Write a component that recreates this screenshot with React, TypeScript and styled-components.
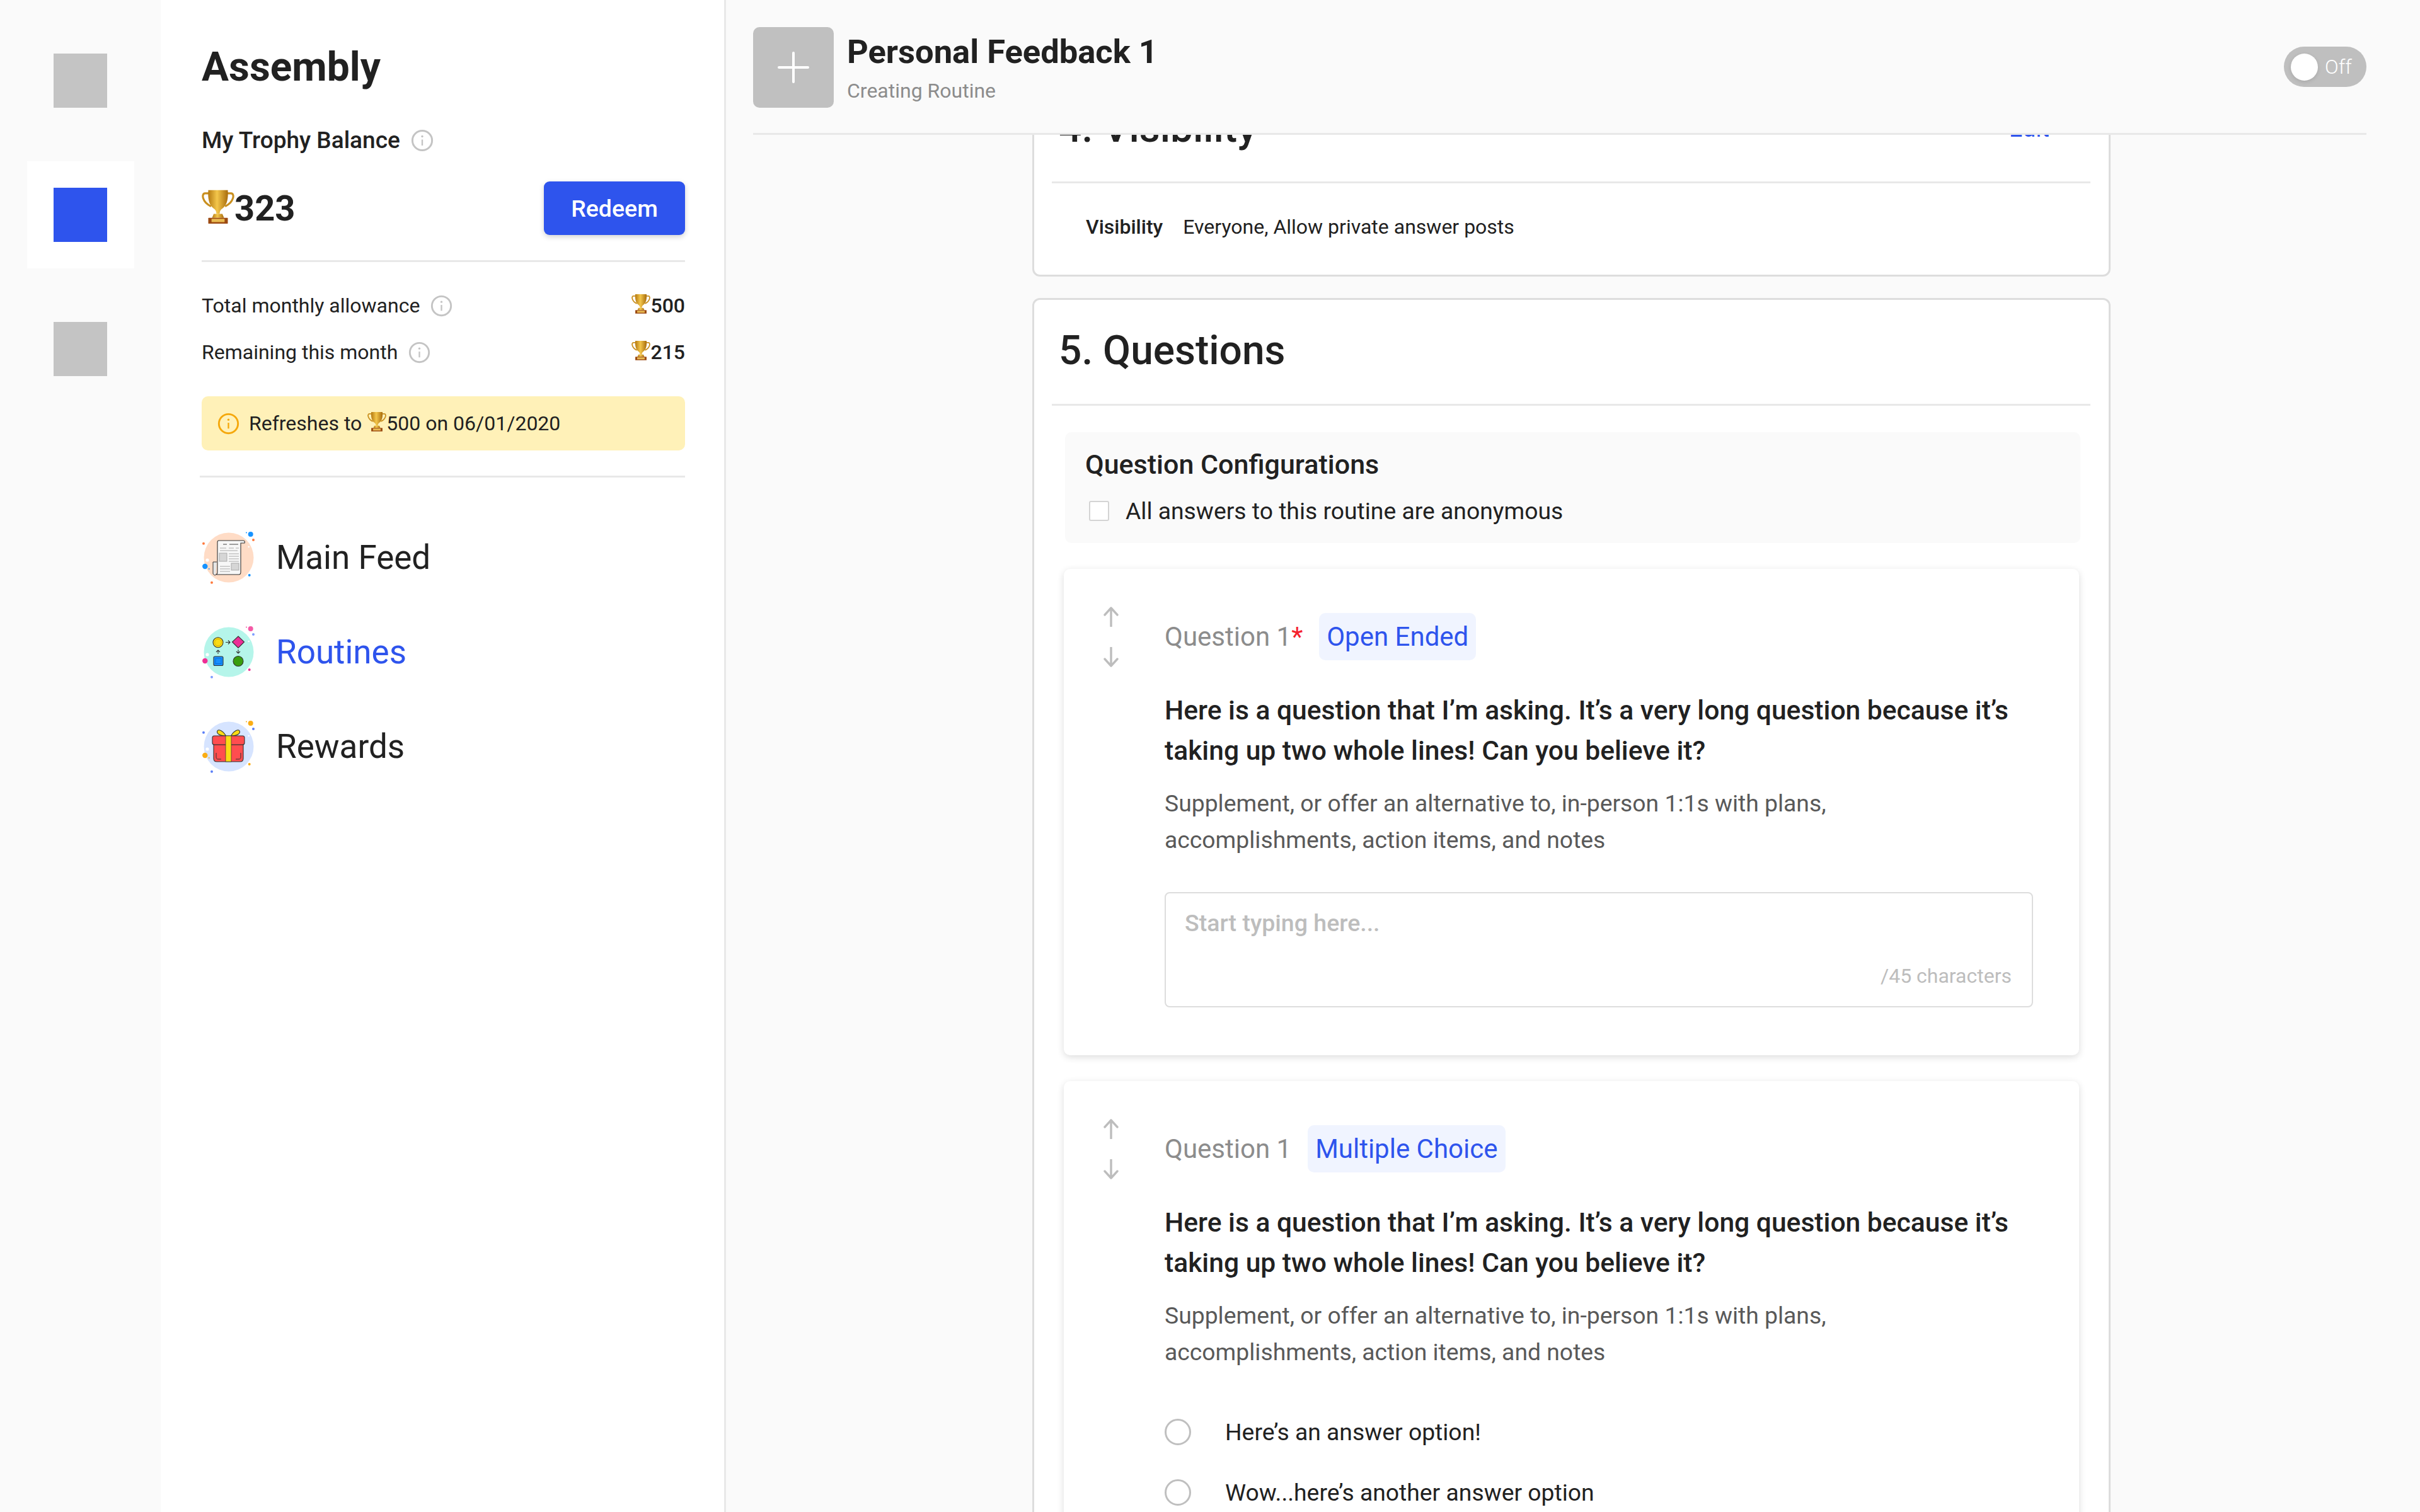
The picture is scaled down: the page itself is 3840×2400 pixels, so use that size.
import { useId } from 'react';
import styled, { createGlobalStyle } from 'styled-components';

const BLUE = '#2e54ed';
const INK = '#212121';

const GlobalStyle = createGlobalStyle`
  html, body {
    margin: 0;
    padding: 0;
    background: #fafafa;
  }
  body {
    font-family: Roboto, "Liberation Sans", sans-serif;
    color: ${INK};
  }
  * {
    box-sizing: border-box;
  }
`;

function Trophy({ size }: { size: number }) {
  const id = useId();
  return (
    <TrophySvg width={size} height={size * 1.06} viewBox="0 0 60 64">
      <defs>
        <linearGradient id={id} x1="0" x2="1" y1="0" y2="0">
          <stop offset="0" stopColor="#b57a12" />
          <stop offset="0.45" stopColor="#f3c64b" />
          <stop offset="1" stopColor="#a86c0c" />
        </linearGradient>
      </defs>
      <path
        d="M15 8H6C2 8 1 13 3 18c2 6 8 11 14 14M45 8h9c4 0 5 5 3 10-2 6-8 11-14 14"
        fill="none"
        stroke="#c98f1e"
        strokeWidth="3.6"
      />
      <path d="M12 2h36c1 15-1 27-9 33-4 3-6 5-6 11h-6c0-6-2-8-6-11C13 29 11 17 12 2z" fill={`url(#${id})`} />
      <path d="M22 46h16l3 7H19z" fill={`url(#${id})`} />
      <rect x="12" y="53" width="36" height="11" rx="1" fill="#9c4a12" />
      <rect x="18" y="55" width="24" height="6" fill="#e9bb52" />
    </TrophySvg>
  );
}

function InfoIcon({ size = 36, color = '#c4c4c4' }: { size?: number; color?: string }) {
  return (
    <svg width={size} height={size} viewBox="0 0 36 36" fill="none" style={{ flex: 'none' }}>
      <circle cx="18" cy="18" r="15.6" stroke={color} strokeWidth="3" />
      <circle cx="18" cy="11.5" r="1.7" fill={color} />
      <path d="M18 16.5v9.5" stroke={color} strokeWidth="2.4" />
    </svg>
  );
}

function ArrowUp() {
  return (
    <svg width="24" height="32" viewBox="0 0 24 32" fill="none">
      <path d="M12 31V2M2 13 12 2l10 11" stroke="#bdbdbd" strokeWidth="3.4" strokeLinecap="round" strokeLinejoin="round" />
    </svg>
  );
}

function ArrowDown() {
  return (
    <svg width="24" height="32" viewBox="0 0 24 32" fill="none">
      <path d="M12 1v29M2 19l10 11 10-11" stroke="#bdbdbd" strokeWidth="3.4" strokeLinecap="round" strokeLinejoin="round" />
    </svg>
  );
}

function FeedIcon() {
  return (
    <svg width="90" height="90" viewBox="0 0 90 90">
      <circle cx="43" cy="45" r="39.5" fill="#ffdcc6" />
      <circle cx="77.7" cy="8" r="4" fill="#1793ff" />
      <circle cx="71" cy="5.5" r="1" fill="#1793ff" />
      <circle cx="82" cy="17" r="2" fill="#ff7a3d" />
      <circle cx="3" cy="22.7" r="2" fill="#ff7a3d" />
      <circle cx="9" cy="49" r="2.6" fill="#fff" />
      <circle cx="5.3" cy="59" r="4.2" fill="#1793ff" />
      <circle cx="11.7" cy="63" r="1" fill="#1793ff" />
      <circle cx="75.7" cy="73" r="2" fill="#1793ff" />
      <circle cx="16" cy="84.7" r="2" fill="#ff7a3d" />
      <circle cx="74.7" cy="28" r="1.3" fill="#fff" />
      <path d="M24 52h-6v18c0 2 2 3 4 3" fill="#e6e6e6" stroke="#333" strokeWidth="1" />
      <path
        d="M27 18h39c2 0 3 2 2 4h-6v46c0 2-1 4-3 4H22c2 0 3-2 3-4V21c0-2 0-3 2-3z"
        fill="#f7f7f7"
        stroke="#333"
        strokeWidth="1.1"
      />
      <path d="M34 24h6M44 24h14" stroke="#444" strokeWidth="1.2" />
      <path
        d="M29 30h10M43 30h8M54 30h5M29 34h28M43 39h16M43 43h16M43 47h16M43 51h16M29 59h16M29 63h16M29 67h16"
        stroke="#aaa"
        strokeWidth="1.1"
      />
      <rect x="28" y="38" width="12" height="13" fill="#d6d6d6" stroke="#aaa" />
      <rect x="47" y="54" width="12" height="11" fill="#d6d6d6" stroke="#aaa" />
    </svg>
  );
}

function RoutinesIcon() {
  return (
    <svg width="90" height="90" viewBox="0 0 90 90">
      <circle cx="43" cy="45" r="39.5" fill="#b5f5ea" />
      <circle cx="77.7" cy="8" r="4" fill="#f45aa6" />
      <circle cx="71" cy="5.5" r="1" fill="#f45aa6" />
      <circle cx="82" cy="17" r="2" fill="#7d9cff" />
      <circle cx="9" cy="49" r="2.6" fill="#fff" />
      <circle cx="5.3" cy="59" r="4.2" fill="#ee2f95" />
      <circle cx="75.7" cy="73" r="2" fill="#ee2f95" />
      <circle cx="16" cy="84.7" r="2" fill="#7d9cff" />
      <circle cx="74.7" cy="28" r="1.3" fill="#fff" />
      <circle cx="26" cy="29.7" r="8" fill="#fadb14" stroke="#333" strokeWidth="1.1" />
      <circle cx="26" cy="29.7" r="5.4" fill="none" stroke="#d4b106" strokeWidth="1" />
      <path d="M58 20l9.5 9-9.5 9.5-9.5-9.5z" fill="#eb2f96" stroke="#333" strokeWidth="1.1" />
      <rect x="19" y="52" width="15" height="14.5" rx="2" fill="#1890ff" stroke="#333" strokeWidth="1.1" />
      <rect x="22" y="55" width="9" height="8.5" fill="none" stroke="#096dd9" />
      <circle cx="58" cy="59.5" r="8" fill="#389e0d" stroke="#333" strokeWidth="1.1" />
      <path
        d="M38 29.5h7M42 26.5l3 3-3 3M26 48v-6M23 45l3-3 3 3M58 41v6M55 44l3 3 3-3"
        fill="none"
        stroke="#333"
        strokeWidth="1.1"
      />
    </svg>
  );
}

function RewardsIcon() {
  return (
    <svg width="90" height="90" viewBox="0 0 90 90">
      <circle cx="43" cy="45" r="39.5" fill="#d6e4ff" />
      <circle cx="77.7" cy="8" r="4" fill="#faad14" />
      <circle cx="71" cy="5.5" r="1" fill="#faad14" />
      <circle cx="82" cy="17" r="2" fill="#597ef7" />
      <circle cx="3" cy="22.7" r="2" fill="#597ef7" />
      <circle cx="9" cy="49" r="2.6" fill="#fff" />
      <circle cx="5.3" cy="59" r="4.2" fill="#faad14" />
      <circle cx="11.7" cy="63" r="1" fill="#faad14" />
      <circle cx="75.7" cy="73" r="2" fill="#faad14" />
      <circle cx="16" cy="84.7" r="2" fill="#597ef7" />
      <circle cx="74.7" cy="28" r="1.3" fill="#fff" />
      <path d="M38 27c-4-7-11-10-13-7-2 4 3 8 13 8zM47 27c4-7 11-10 13-7 2 4-3 8-13 8z" fill="#fadb14" stroke="#333" strokeWidth="1.1" />
      <path d="M19 42h47v22c0 3-2 5-5 5H24c-3 0-5-2-5-5z" fill="#ff4d4f" stroke="#333" strokeWidth="1.1" />
      <rect x="17" y="28" width="51" height="14" rx="3" fill="#ff4d4f" stroke="#333" strokeWidth="1.1" />
      <rect x="38" y="28" width="9" height="41" fill="#fadb14" stroke="#333" strokeWidth="0.7" />
      <path d="M23 55v7c0 2 1 3 3 3h5M62 55v7c0 2-1 3-3 3h-5" fill="none" stroke="#333" strokeWidth="1" />
    </svg>
  );
}

function QuestionHead({ required, kind }: { required?: boolean; kind: string }) {
  return (
    <LabelRow>
      <QuestionLabel>
        Question 1{required && <Star>*</Star>}
      </QuestionLabel>
      <KindBadge>{kind}</KindBadge>
    </LabelRow>
  );
}

function QuestionCopy() {
  return (
    <>
      <QuestionText>
        Here is a question that I’m asking. It’s a very long question because it’s taking up two whole lines! Can you
        believe it?
      </QuestionText>
      <QuestionHint>
        Supplement, or offer an alternative to, in-person 1:1s with plans,
        <br />
        accomplishments, action items, and notes
      </QuestionHint>
    </>
  );
}

export default function App() {
  return (
    <Page>
      <GlobalStyle />
      <Rail>
        <RailItem>
          <RailSquare />
        </RailItem>
        <RailItem $active>
          <RailSquare $active />
        </RailItem>
        <RailItem>
          <RailSquare />
        </RailItem>
      </Rail>

      <Sidebar>
        <Brand>Assembly</Brand>
        <BalanceTitle>
          My Trophy Balance
          <InfoIcon />
        </BalanceTitle>
        <ScoreRow>
          <Score>
            <Trophy size={52} />
            323
          </Score>
          <RedeemButton type="button">Redeem</RedeemButton>
        </ScoreRow>
        <Rule $top={40} />
        <StatRow $top={47}>
          <StatLabel>
            Total monthly allowance
            <InfoIcon size={35} />
          </StatLabel>
          <StatValue>
            <Trophy size={30} />
            500
          </StatValue>
        </StatRow>
        <StatRow $top={30}>
          <StatLabel>
            Remaining this month
            <InfoIcon size={35} />
          </StatLabel>
          <StatValue>
            <Trophy size={30} />
            215
          </StatValue>
        </StatRow>
        <Notice>
          <InfoIcon size={35} color="#f5a80c" />
          <NoticeText>
            Refreshes to
            <NoticeTrophy>
              <Trophy size={30} />
            </NoticeTrophy>
            500 on 06/01/2020
          </NoticeText>
        </Notice>
        <Rule $top={40} $bleed />
        <Nav>
          <NavItem>
            <FeedIcon />
            <NavLabel>Main Feed</NavLabel>
          </NavItem>
          <NavItem>
            <RoutinesIcon />
            <NavLabel $active>Routines</NavLabel>
          </NavItem>
          <NavItem>
            <RewardsIcon />
            <NavLabel>Rewards</NavLabel>
          </NavItem>
        </Nav>
      </Sidebar>

      <Main>
        <HeaderBar>
          <HeaderInner>
            <PlusBox>
              <svg width="50" height="50" viewBox="0 0 50 50" fill="none">
                <path d="M25 2v46M2 25h46" stroke="#fff" strokeWidth="4" strokeLinecap="round" />
              </svg>
            </PlusBox>
            <HeaderText>
              <RoutineName>Personal Feedback 1</RoutineName>
              <RoutineStatus>Creating Routine</RoutineStatus>
            </HeaderText>
            <Toggle>
              <ToggleKnob />
              <ToggleText>Off</ToggleText>
            </Toggle>
          </HeaderInner>
        </HeaderBar>

        <ScrollArea>
          <Column>
            <Card>
              <CardHead>
                <CardTitle>4. Visibility</CardTitle>
                <EditLink>Edit</EditLink>
              </CardHead>
              <VisibilityRow>
                <VisibilityKey>Visibility</VisibilityKey>
                <span>Everyone, Allow private answer posts</span>
              </VisibilityRow>
            </Card>

            <Card>
              <CardHead>
                <CardTitle>5. Questions</CardTitle>
              </CardHead>
              <ConfigPanel>
                <ConfigTitle>Question Configurations</ConfigTitle>
                <CheckRow>
                  <CheckBox />
                  All answers to this routine are anonymous
                </CheckRow>
              </ConfigPanel>

              <QuestionCard>
                <Arrows>
                  <ArrowUp />
                  <ArrowDown />
                </Arrows>
                <QuestionBody>
                  <QuestionHead required kind="Open Ended" />
                  <QuestionCopy />
                  <AnswerBox>
                    <AnswerInput placeholder="Start typing here..." />
                    <CharCount>/45 characters</CharCount>
                  </AnswerBox>
                </QuestionBody>
              </QuestionCard>

              <QuestionCard>
                <Arrows>
                  <ArrowUp />
                  <ArrowDown />
                </Arrows>
                <QuestionBody>
                  <QuestionHead kind="Multiple Choice" />
                  <QuestionCopy />
                  <Options>
                    <OptionRow>
                      <Radio />
                      Here’s an answer option!
                    </OptionRow>
                    <OptionRow>
                      <Radio />
                      Wow...here’s another answer option
                    </OptionRow>
                  </Options>
                </QuestionBody>
              </QuestionCard>
            </Card>
          </Column>
        </ScrollArea>
      </Main>
    </Page>
  );
}

const Page = styled.div`
  display: flex;
  width: 3840px;
  height: 2400px;
  overflow: hidden;
  background: #fafafa;
`;

const Rail = styled.nav`
  flex: none;
  width: 255px;
  padding-top: 43px;
  display: flex;
  flex-direction: column;
  align-items: center;
  gap: 43px;
`;

const RailItem = styled.div<{ $active?: boolean }>`
  width: 170px;
  height: 170px;
  display: flex;
  align-items: center;
  justify-content: center;
  background: ${(p) => (p.$active ? '#fff' : 'transparent')};
`;

const RailSquare = styled.div<{ $active?: boolean }>`
  width: 85px;
  height: 86px;
  background: ${(p) => (p.$active ? BLUE : '#c4c4c4')};
`;

const Sidebar = styled.aside`
  flex: none;
  width: 897px;
  height: 100%;
  padding: 67px 62px 0 65px;
  background: #fff;
  border-right: 3px solid #e8e8e8;
`;

const Brand = styled.h1`
  margin: 0;
  font-size: 64px;
  line-height: 80px;
  font-weight: 700;
`;

const BalanceTitle = styled.div`
  margin-top: 54px;
  display: flex;
  align-items: center;
  gap: 17px;
  font-size: 37px;
  line-height: 44px;
  font-weight: 500;
`;

const ScoreRow = styled.div`
  margin-top: 43px;
  display: flex;
  align-items: center;
  justify-content: space-between;
`;

const Score = styled.div`
  display: flex;
  align-items: center;
  font-size: 56px;
  font-weight: 700;
  line-height: 60px;
`;

const TrophySvg = styled.svg`
  flex: none;
  margin-top: -6px;
`;

const RedeemButton = styled.button`
  width: 224px;
  height: 85px;
  border: none;
  border-radius: 9px;
  background: ${BLUE};
  color: #fff;
  font-family: inherit;
  font-size: 37.5px;
  font-weight: 500;
  box-shadow: 0 3px 8px rgba(0, 0, 0, 0.18);
`;

const Rule = styled.div<{ $top: number; $bleed?: boolean }>`
  height: 3px;
  margin-top: ${(p) => p.$top}px;
  margin-left: ${(p) => (p.$bleed ? '-3px' : '0')};
  background: #e8e8e8;
`;

const StatRow = styled.div<{ $top: number }>`
  margin-top: ${(p) => p.$top}px;
  height: 44px;
  display: flex;
  align-items: center;
  justify-content: space-between;
  font-size: 32px;
`;

const StatLabel = styled.div`
  display: flex;
  align-items: center;
  gap: 17px;
`;

const StatValue = styled.div`
  display: flex;
  align-items: center;
  font-weight: 500;
`;

const Notice = styled.div`
  margin-top: 48px;
  height: 86px;
  padding-left: 25px;
  display: flex;
  align-items: center;
  gap: 15px;
  border-radius: 10px;
  background: #fff1b8;
  font-size: 32px;
`;

const NoticeText = styled.div`
  display: flex;
  align-items: center;
`;

const NoticeTrophy = styled.span`
  display: inline-flex;
  margin-left: 9px;
`;

const Nav = styled.div`
  margin-top: 82px;
  display: flex;
  flex-direction: column;
  gap: 60px;
`;

const NavItem = styled.a`
  height: 90px;
  display: flex;
  align-items: center;
  gap: 28px;
`;

const NavLabel = styled.span<{ $active?: boolean }>`
  font-size: 53px;
  color: ${(p) => (p.$active ? BLUE : INK)};
`;

const Main = styled.main`
  flex: 1;
  min-width: 0;
  height: 100%;
  display: flex;
  flex-direction: column;
`;

const HeaderBar = styled.header`
  flex: none;
  padding: 0 85px 0 43px;
`;

const HeaderInner = styled.div`
  height: 214px;
  padding-top: 43px;
  border-bottom: 3px solid #e8e8e8;
  display: flex;
  align-items: flex-start;
`;

const PlusBox = styled.div`
  flex: none;
  width: 128px;
  height: 128px;
  border-radius: 10px;
  background: #c0c0c0;
  display: flex;
  align-items: center;
  justify-content: center;
`;

const HeaderText = styled.div`
  margin-left: 21px;
  padding-top: 7px;
`;

const RoutineName = styled.div`
  font-size: 52.5px;
  line-height: 64px;
  font-weight: 700;
`;

const RoutineStatus = styled.div`
  margin-top: 10px;
  font-size: 32px;
  line-height: 40px;
  color: #8c8c8c;
`;

const Toggle = styled.div`
  margin: 31px 0 0 auto;
  width: 131px;
  height: 64px;
  padding-left: 11px;
  border-radius: 32px;
  background: #bfbfbf;
  display: flex;
  align-items: center;
  gap: 11px;
`;

const ToggleKnob = styled.div`
  width: 43px;
  height: 43px;
  border-radius: 50%;
  background: #fff;
  box-shadow: 0 2px 6px rgba(0, 0, 0, 0.12);
`;

const ToggleText = styled.span`
  color: #fff;
  font-size: 32px;
  font-weight: 300;
`;

const ScrollArea = styled.div`
  flex: 1;
  min-height: 0;
  overflow: hidden;
`;

// scrolled by 93px, so the top of card 4 sits under the header
const Column = styled.div`
  width: 1711px;
  margin: -94px 0 0 486px;
  display: flex;
  flex-direction: column;
  gap: 34px;
`;

const Card = styled.section`
  background: #fff;
  border: 3px solid #ddd;
  border-radius: 12px;
`;

const CardHead = styled.div`
  margin: 0 29px 0 28px;
  height: 168px;
  padding: 0 65px 3px 11px;
  border-bottom: 3px solid #e8e8e8;
  display: flex;
  align-items: center;
  justify-content: space-between;
`;

const CardTitle = styled.h2`
  margin: 0;
  font-size: 64px;
  line-height: 80px;
  font-weight: 500;
`;

const EditLink = styled.a`
  color: ${BLUE};
  font-size: 38px;
`;

const VisibilityRow = styled.div`
  margin: 47px 0 54px 82px;
  display: flex;
  gap: 32px;
  font-size: 32px;
  line-height: 44px;
`;

const VisibilityKey = styled.span`
  font-weight: 500;
`;

const ConfigPanel = styled.div`
  margin: 42px 45px 0 49px;
  height: 176px;
  padding: 26px 32px 0;
  border-radius: 10px;
  background: #fafafa;
`;

const ConfigTitle = styled.div`
  font-size: 43px;
  line-height: 50px;
  font-weight: 500;
`;

const CheckRow = styled.label`
  margin-top: 27px;
  display: flex;
  align-items: center;
  gap: 26px;
  font-size: 37.3px;
  line-height: 44px;
`;

const CheckBox = styled.span`
  flex: none;
  width: 32px;
  height: 32px;
  margin-left: 6px;
  border: 2px solid #d4d4d4;
  border-radius: 3px;
  background: #fff;
`;

const QuestionCard = styled.article`
  margin: 41px 47px 0;
  padding: 60px 73px 76px 63px;
  display: flex;
  gap: 73px;
  background: #fff;
  border-radius: 10px;
  box-shadow: 0 3px 12px rgba(0, 0, 0, 0.14);
`;

const Arrows = styled.div`
  flex: none;
  width: 24px;
  display: flex;
  flex-direction: column;
  gap: 32px;
`;

const QuestionBody = styled.div`
  flex: 1;
  min-width: 0;
  padding-top: 10px;
`;

const LabelRow = styled.div`
  display: flex;
  align-items: center;
  gap: 26px;
`;

const QuestionLabel = styled.span`
  font-size: 42px;
  color: #8c8c8c;
`;

const Star = styled.span`
  color: #f5222d;
`;

const KindBadge = styled.span`
  height: 75px;
  padding: 0 12px;
  display: flex;
  align-items: center;
  border-radius: 10px;
  background: #f0f4ff;
  color: ${BLUE};
  font-size: 42px;
`;

const QuestionText = styled.p`
  margin: 47px 0 0;
  font-size: 42.6px;
  line-height: 64px;
  font-weight: 500;
`;

const QuestionHint = styled.p`
  margin: 23px 0 0;
  font-size: 37.3px;
  line-height: 58px;
  color: #595959;
`;

const AnswerBox = styled.div`
  position: relative;
  margin-top: 54px;
  height: 183px;
  border: 2px solid #ddd;
  border-radius: 8px;
`;

const AnswerInput = styled.textarea`
  display: block;
  width: 100%;
  height: 100%;
  padding: 24px 30px;
  border: none;
  border-radius: 8px;
  outline: none;
  resize: none;
  background: transparent;
  font-family: inherit;
  font-size: 37.5px;
  font-weight: 500;
  line-height: 46px;

  &::placeholder {
    color: #bdbdbd;
  }
`;

const CharCount = styled.span`
  position: absolute;
  right: 32px;
  bottom: 28px;
  color: #bdbdbd;
  font-size: 32px;
  line-height: 40px;
`;

const Options = styled.div`
  margin-top: 77px;
  display: flex;
  flex-direction: column;
  gap: 54px;
`;

const OptionRow = styled.label`
  display: flex;
  align-items: center;
  gap: 54px;
  font-size: 37.3px;
  line-height: 42px;
`;

const Radio = styled.span`
  flex: none;
  width: 42px;
  height: 42px;
  border: 3px solid #bfbfbf;
  border-radius: 50%;
`;
